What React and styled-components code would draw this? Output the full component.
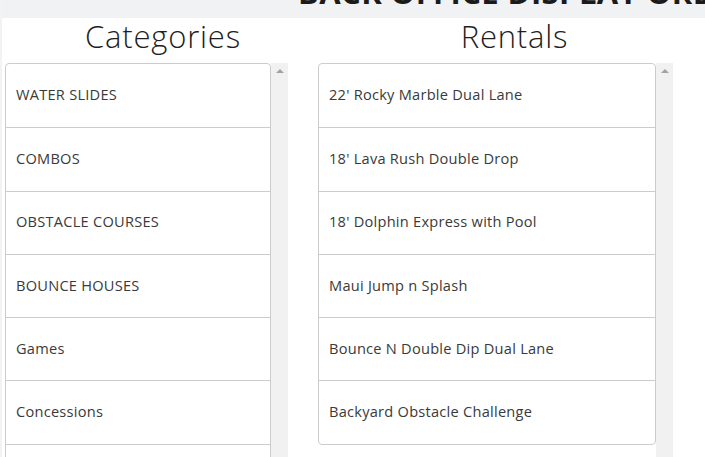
import React from "react";
import styled, { createGlobalStyle } from "styled-components";

const GlobalStyle = createGlobalStyle`
  html, body {
    margin: 0;
    padding: 0;
    background: #ffffff;
    font-family: "Open Sans", "Liberation Sans", sans-serif;
    color: #333333;
    overflow: hidden;
  }
`;

const CATEGORIES = [
  "WATER SLIDES",
  "COMBOS",
  "OBSTACLE COURSES",
  "BOUNCE HOUSES",
  "Games",
  "Concessions",
  "Tents",
];

const RENTALS = [
  "22' Rocky Marble Dual Lane",
  "18' Lava Rush Double Drop",
  "18' Dolphin Express with Pool",
  "Maui Jump n Splash",
  "Bounce N Double Dip Dual Lane",
  "Backyard Obstacle Challenge",
];

const Page = styled.div`
  width: 705px;
  height: 457px;
  overflow: hidden;
  border-left: 2px solid #f3f3f3;
  box-sizing: border-box;
`;

const TopBar = styled.div`
  height: 18px;
  background: #f1f2f4;
  overflow: hidden;
  padding-left: 296px;
  white-space: nowrap;
`;

const TopTitle = styled.h1`
  margin: -23px 0 0;
  font-size: 31px;
  line-height: 31px;
  font-weight: 700;
  color: #1b1b1b;
  letter-spacing: 0.4px;
`;

const Headings = styled.div`
  display: flex;
  height: 45px;
`;

const Heading = styled.h2`
  width: ${(p) => p.$width}px;
  margin: 0;
  text-align: center;
  font-size: 31px;
  font-weight: 300;
  line-height: 36px;
  color: #1e1e1e;
  letter-spacing: 0.8px;
`;

const Lists = styled.div`
  display: flex;
  gap: 30px;
  padding-left: 3px;
`;

const ListWrap = styled.div`
  display: flex;
  align-items: flex-start;
`;

const ListBox = styled.div`
  width: ${(p) => p.$width}px;
  border: 1px solid #cccccc;
  border-radius: 4px;
  box-sizing: border-box;
  background: #ffffff;
`;

const Item = styled.div`
  height: 63.3px;
  display: flex;
  align-items: center;
  padding: 0 10px 3px;
  font-size: 14.6px;
  color: #3a3a3a;
  letter-spacing: 0.25px;
  box-sizing: border-box;
  & + & {
    border-top: 1px solid #cccccc;
  }
`;

const Track = styled.div`
  width: 17px;
  height: 400px;
  background: #f1f1f1;
  display: flex;
  justify-content: center;
  padding-top: 6px;
  box-sizing: border-box;
`;

const Arrow = styled.div`
  width: 0;
  height: 0;
  border-left: 4px solid transparent;
  border-right: 4px solid transparent;
  border-bottom: 4px solid #a3a3a3;
`;

const ScrollList = ({ width, items }) => (
  <ListWrap>
    <ListBox $width={width}>
      {items.map((label) => (
        <Item key={label}>{label}</Item>
      ))}
    </ListBox>
    <Track>
      <Arrow />
    </Track>
  </ListWrap>
);

const App = () => (
  <>
    <GlobalStyle />
    <Page>
      <TopBar>
        <TopTitle>BACK OFFICE DISPLAY ORDERS</TopTitle>
      </TopBar>
      <Headings>
        <Heading $width={322}>Categories</Heading>
        <Heading $width={381}>Rentals</Heading>
      </Headings>
      <Lists>
        <ScrollList width={266} items={CATEGORIES} />
        <ScrollList width={338} items={RENTALS} />
      </Lists>
    </Page>
  </>
);

export default App;
